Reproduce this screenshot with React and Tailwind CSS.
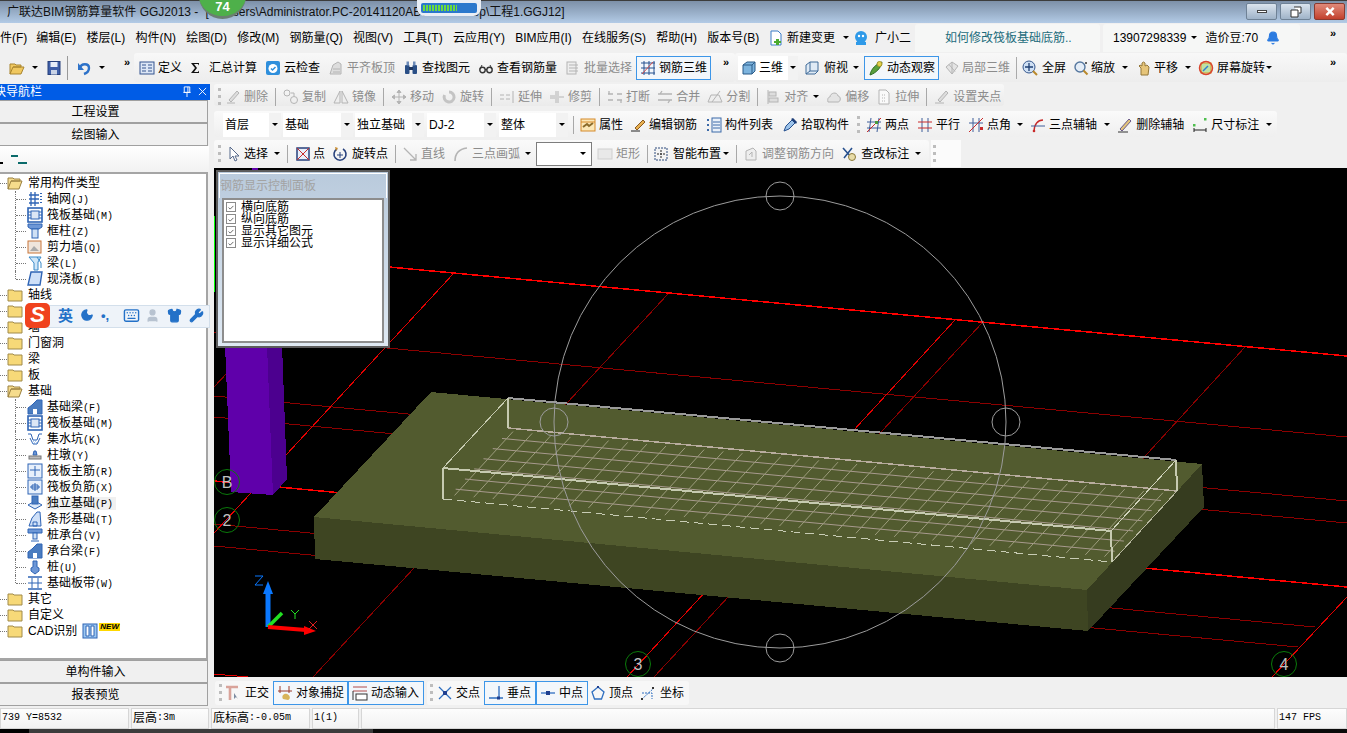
import React from "react";
import { Bell, Keyboard, Moon, Shirt, User, Wrench } from "lucide-react";

const B = "#2f64b5";
const G = "#b4b4b4";

// toolbar and tree icons, all on a 16 unit box
const icons = {
  open: <><path d="M1 14V4h5l1 1h5v2H4l-3 7h11l3-7H4" fill="#f0c860" stroke="#a9852f" /></>,
  save: <><rect x="2" y="1.500" width="12" height="13" fill="#3f5fa8" stroke="#27407c" /><rect x="4.500" y="2" width="7" height="5" fill="#e8eef8" /><rect x="5" y="10" width="6" height="4.500" fill="#c9d3e6" /></>,
  undo: <><path d="M3 8c1-5 9-5 9 0 0 3-2 5-5 6" fill="none" stroke="#2d72c9" strokeWidth="2.400" /><path d="M1 3v7h6z" fill="#2d72c9" /></>,
  define: <><rect x="1" y="2" width="14" height="12" fill="#dce6f5" stroke="#34558f" /><path d="M3 5h4M3 8h4M3 11h4M9 5h4M9 8h4M9 11h4" stroke="#34558f" /></>,
  sigma: <path d="M1 3h8v2.500L8 4H4l3 4-3 4h4l1-1.500V13H1l4-5z" fill="#111" />,
  cloud: <><rect x="1" y="1" width="14" height="14" rx="2" fill="#2f8fdc" /><circle cx="8" cy="8.500" r="4.500" fill="#fff" /><path d="M6 8.500l1.500 1.500 3-3" fill="none" stroke="#2f8fdc" strokeWidth="1.500" /></>,
  align: <><path d="M2 14l3-9 5-3 3 2v10z" fill="#ddd" stroke={G} /><path d="M5 9h7M5 12h7" stroke={G} /></>,
  binoc: <><rect x="2" y="5" width="4.500" height="9" rx="1" fill="#2a4f86" /><rect x="9.500" y="5" width="4.500" height="9" rx="1" fill="#2a4f86" /><rect x="3.500" y="1.500" width="2.500" height="4" fill="#6d8bb8" /><rect x="10" y="1.500" width="2.500" height="4" fill="#6d8bb8" /><rect x="6" y="7" width="4" height="3" fill="#1d3660" /></>,
  glasses: <><circle cx="4.500" cy="10" r="2.700" fill="none" stroke="#333" strokeWidth="1.400" /><circle cx="11.500" cy="10" r="2.700" fill="none" stroke="#333" strokeWidth="1.400" /><path d="M7 9.500h2M2 9l2-4M14 9l-2-4" stroke="#333" /></>,
  batch: <><rect x="2" y="2" width="9" height="12" fill="#eee" stroke={G} /><path d="M4 5h9M4 8h9M4 11h9" stroke={G} /></>,
  rebar3d: <><path d="M1 3h14M1 8h14M1 13h14M4 1v14M9 1v14M14 1v14" fill="none" stroke="#24508f" /><path d="M2 14L13 2" stroke="#d04a4a" /></>,
  cube: <><path d="M2 5l4-3h8v9l-3 3H2z" fill="#7db4de" stroke="#2b5a88" /><path d="M2 5h9v9M11 5l3-3" fill="none" stroke="#2b5a88" /></>,
  top: <><path d="M2 5l4-3h8v9l-3 3H2z" fill="#dfeaf5" stroke="#3f6a98" /><path d="M6 2v9h8M6 11l-4 3" fill="none" stroke="#3f6a98" /></>,
  orbit: <><path d="M2 15c1-6 6-11 12-13-1 6-6 11-12 13z" fill="#5aa03c" stroke="#2f6b22" /><circle cx="11.500" cy="4" r="2.500" fill="#e2d24c" stroke="#a0922a" /></>,
  local3d: <><path d="M2 7l6-5 6 4-6 8z" fill="#e4e4e4" stroke={G} /><path d="M5 4.500l6 7M8 2v12" stroke={G} /></>,
  full: <><circle cx="7" cy="7" r="6" fill="#cfe0f4" stroke="#36588e" /><path d="M7 3v8M3 7h8" stroke="#1f3f73" strokeWidth="1.300" /><path d="M11 11l4 4" stroke="#b9892b" strokeWidth="2" /></>,
  zoom: <><circle cx="7" cy="7" r="5" fill="#e4edf7" stroke="#55779f" strokeWidth="1.400" /><path d="M10.500 10.500l4 4" stroke="#b9892b" strokeWidth="2" /><path d="M12 3h2M13 2v2" stroke="#333" /></>,
  pan: <path d="M5 15V8L3 6l1-1 2 1V3l1.500-1L9 3v3l2-1 2 2-1 8z" fill="#e6c57a" stroke="#94783a" />,
  rot: <><rect x="3" y="3" width="10" height="10" fill="#bfe0a5" stroke="#d4a020" /><circle cx="8" cy="8" r="6.500" fill="none" stroke="#d8452f" strokeWidth="1.500" /><path d="M5 11l5-5" stroke="#2f7fcf" strokeWidth="1.500" /></>,
  file: <><path d="M3 1h7l3 3v11H3z" fill="#fff" stroke="#3d7fc8" /><path d="M8 9h3v2h2v2h-2v2H8v-2H6v-2h2z" fill="#4caa2f" /></>,
  ghost: <><circle cx="8" cy="7" r="6" fill="#2f9ae8" /><circle cx="6" cy="6" r="1.200" fill="#fff" /><circle cx="10" cy="6" r="1.200" fill="#fff" /><path d="M3 12h10v3H3z" fill="#2f9ae8" /></>,
  del: <><path d="M2 14h8M4 11l8-9 2 2-8 9z" fill="#ddd" stroke={G} /></>,
  copy: <><circle cx="4" cy="4" r="3" fill="none" stroke={G} /><circle cx="11" cy="11" r="3.500" fill="none" stroke={G} /><path d="M8 4h3v3" fill="none" stroke={G} /></>,
  mirror: <><path d="M7 2L1 14h6zM9 2l6 12H9z" fill="#eee" stroke={G} /></>,
  move: <path d="M8 1v14M1 8h14M8 1L6 3.500h4zM8 15l-2-2.500h4zM1 8l2.500-2v4zM15 8l-2.500-2v4z" fill={G} stroke={G} />,
  rotate: <path d="M8 3a5 5 0 1 1-4.500 3" fill="none" stroke="#c4c4c4" strokeWidth="3" />,
  extend: <path d="M14 2v12M1 6h4M1 10h4M7 6h4M7 10h4" fill="none" stroke={G} />,
  trim: <path d="M7 2v12M9 2v12M1 7h5M1 9h5M10 8h5" fill="none" stroke={G} />,
  split: <path d="M1 5h5M10 5h5M1 11h5M10 11h5M2 2v3M14 11v3" fill="none" stroke={G} strokeWidth="1.300" />,
  merge: <path d="M1 5h14M1 11h14M5 2l-2 3M11 14l2-3" fill="none" stroke={G} strokeWidth="1.300" />,
  cut: <><path d="M1 13h14L12 6H4z" fill="#eee" stroke={G} /><path d="M5 13l8-11" stroke={G} /></>,
  alignL: <><path d="M3 1v14" stroke={G} /><rect x="4" y="3" width="7" height="4" fill="#ddd" stroke={G} /><rect x="4" y="9" width="9" height="4" fill="#ddd" stroke={G} /></>,
  offset: <path d="M2 13c-1-4 1-5 2-5 0-4 7-6 8-1 3 0 3 6 0 6z" fill="#e4e4e4" stroke={G} />,
  stretch: <><path d="M3 1h7l3 3v11H3z" fill="#fafafa" stroke={G} /><path d="M6 6h4M6 9h4M6 12h4" stroke={G} strokeDasharray="1 1" /></>,
  grip: <><path d="M1 14h9M4 11l8-9 2 2-8 9z" fill="#ddd" stroke={G} /></>,
  prop: <><rect x="1" y="2" width="14" height="12" fill="#fbe7b7" stroke="#d58a2a" /><path d="M3 10l4-3 2 2 4-3" fill="none" stroke="#8a6a2a" strokeWidth="2" /><path d="M1 5h14" stroke="#d58a2a" /></>,
  pen: <><path d="M1 14h9" stroke="#222" /><path d="M5 11l8-8 2 2-8 8z" fill="#e8b050" stroke="#8a5a20" /></>,
  list: <><path d="M1 3h2M1 8h2M1 13h2" stroke="#3d6aa8" strokeWidth="2" /><rect x="6" y="1" width="9" height="14" fill="#eaf1fa" stroke="#3d6aa8" /><path d="M7 5h7M7 8h7M7 11h7" stroke="#3d6aa8" /></>,
  dropper: <><path d="M2 14l2-5 6-6 3 3-6 6z" fill="#9cc3ea" stroke="#244f8e" /><path d="M9 2l2-1 4 4-1 2z" fill="#1e3f78" /></>,
  two: <><path d="M5 1L3 15M13 1L11 15M1 5h14M1 11h14" stroke="#3f5f9a" /><path d="M1 15L15 1" stroke="#c92a2a" /><rect x="9" y="4" width="3" height="3" fill="#4a9a3a" /></>,
  para: <><path d="M5 1v14M11 1v14" stroke="#3f5f9a" /><path d="M1 5h14M1 11h14" stroke="#c92a2a" strokeWidth="1.200" fill="none" /></>,
  angle: <><path d="M5 1v14M11 1v14M1 6h14" stroke="#3f5f9a" /><path d="M1 15L15 1" stroke="#c92a2a" /><rect x="12" y="10" width="3" height="3" fill="#c92a2a" /></>,
  arc: <><path d="M4 15C4 7 8 3 13 3" fill="none" stroke="#c92a2a" strokeWidth="1.300" /><path d="M1 9h14" stroke="#3f5f9a" /><circle cx="4" cy="14" r="1.300" fill="#c92a2a" /></>,
  erase: <><path d="M1 15h10" stroke="#333" /><path d="M3 12l9-10 2 2-9 10z" fill="#e2c47a" stroke="#6a5a8a" /></>,
  dim: <><path d="M2 11v4M14 11v4M2 13h12" stroke="#222" /><rect x="1" y="7" width="2.500" height="2.500" fill="#4fbf4f" /><rect x="12" y="1" width="2.500" height="2.500" fill="#4fbf4f" /></>,
  arrow: <path d="M4 1v12l3-3 2 5 2-1-2-4h4z" fill="#fff" stroke="#55688a" />,
  point: <><rect x="2" y="2" width="12" height="12" fill="#e8eefa" stroke="#27407c" strokeWidth="1.500" /><path d="M2 2l12 12M14 2L2 14" stroke="#c92a2a" /></>,
  rotPt: <><path d="M5 3a6 6 0 1 0 6 0" fill="none" stroke="#27407c" strokeWidth="1.600" /><path d="M8 6v6M5 9h6" stroke="#27407c" /><path d="M3 1l3 1-2 3z" fill="#c98a2a" /></>,
  line: <><path d="M2 2l12 12M14 8v6H8" fill="none" stroke={G} strokeWidth="1.300" /></>,
  arc3: <path d="M2 15C2 8 6 3 14 2" fill="none" stroke={G} strokeWidth="1.600" />,
  rect: <rect x="1" y="3" width="14" height="10" fill="#e9e9e9" stroke="#cfcfcf" />,
  smart: <><rect x="2" y="2" width="12" height="12" fill="#f4f4f4" stroke="#2c4a7c" strokeDasharray="2 1" /><path d="M8 4v8M4 8h8" stroke="#222" strokeDasharray="2 1" /></>,
  rebarDir: <><path d="M3 5l7-3 3 3v9H3z" fill="#eee" stroke={G} /><path d="M6 9l3-3v5" fill="none" stroke={G} /></>,
  check: <><path d="M2 2l9 10M11 2L3 12" stroke="#27508e" strokeWidth="1.600" /><circle cx="11" cy="11" r="3.500" fill="#e8dca8" stroke="#8c7a3a" /></>,
  ortho: <><path d="M1 2h12M5 2v13" stroke="#d9a39a" strokeWidth="2.600" /><path d="M9 8v6l2-2 2 2z" fill="#7d8ba0" /></>,
  snap: <><path d="M3 1v7M12 1v7M1 6h14" stroke="#9a3a2a" /><path d="M6 14c-2-3 1-6 4-5s4 5 1 6z" fill="#d8b45a" /></>,
  input: <><path d="M1 2h14M1 6h14" stroke="#b04a4a" /><rect x="4" y="9" width="11" height="6" fill="#fff" stroke="#333" /><path d="M1 6v9" stroke="#333" /></>,
  cross: <><path d="M2 2l12 12M14 2L2 14" stroke="#2f6fc0" strokeWidth="1.300" /><rect x="6" y="6" width="4" height="4" fill="#1f3f8f" /></>,
  perp: <><path d="M1 13h14M11 1v12" stroke="#2f6fc0" strokeWidth="1.300" /><rect x="9" y="11.500" width="3" height="3" fill="#1f3f8f" /></>,
  mid: <><path d="M1 8h14" stroke="#2f6fc0" strokeWidth="1.300" /><rect x="6" y="6" width="4" height="4" fill="#1f3f8f" /></>,
  vertex: <><path d="M8 2l6 5-2.500 7h-7L2 7z" fill="none" stroke="#2f6fc0" strokeWidth="1.300" /><rect x="7" y="1" width="2" height="2" fill="#1f3f8f" /></>,
  coord: <><path d="M2 14L14 3M2 8h10v6" fill="none" stroke="#2f6fc0" strokeDasharray="2 1" /><rect x="1" y="13" width="2" height="2" fill="#333" /><rect x="12" y="2" width="2" height="2" fill="#333" /></>,
  grid: <><path d="M2 4h10M2 8h10M2 12h10M4 1v14M8 1v14" stroke={B} strokeWidth="1.300" /><path d="M14 2v12" stroke={B} strokeDasharray="1 2" strokeWidth="2" /></>,
  raft: <><rect x="1" y="1" width="14" height="14" fill="#fff" stroke={B} strokeWidth="1.600" /><rect x="4" y="4" width="8" height="8" fill="#dce6f5" stroke={B} /><path d="M1 5h3M1 8h3M1 11h3M12 5h3M12 8h3M12 11h3" stroke={B} /></>,
  column: <><path d="M1 1h14v3l-3 2H4L1 4z" fill="#6d97d6" stroke={B} /><rect x="5" y="6" width="6" height="9" fill="#cfe0f5" stroke={B} /></>,
  wall: <><rect x="1" y="2" width="13" height="12" fill="#efe5dc" stroke="#c9773a" /><path d="M3 12l4-5 5 5" fill="#aaa" /></>,
  beam: <><path d="M2 2h12l-3 5v8H7V8z" fill="#cfe6f8" stroke="#3a8ac8" /><path d="M10 2l4 6v5" fill="none" stroke="#3a8ac8" /></>,
  slab: <path d="M4 1h11l-2 13H1z" fill="#cfe0f8" stroke={B} strokeWidth="1.400" />,
  fbeam: <><path d="M1 15V9l4-3 5-5h5v14z" fill="#4a7cc0" stroke={B} /><path d="M6 15v-5h4v5z" fill="#fff" /></>,
  sump: <><path d="M1 3h3l2 6h4l2-6h3M3 7l3 6h4l3-6" fill="none" stroke={B} /><path d="M6 10h4M5 12h6" stroke="#6fa0e0" strokeDasharray="1 1" /></>,
  pier: <><path d="M6 8l1-4h2l1 4z" fill="#6d97d6" stroke={B} /><rect x="2" y="9" width="12" height="3" fill="#bbb" stroke="#777" /></>,
  rebarM: <><rect x="1" y="1" width="14" height="14" fill="#e8f0fb" stroke={B} /><path d="M8 3v10M3 7h10" stroke={B} /></>,
  rebarN: <><rect x="1" y="1" width="14" height="14" fill="#e8f0fb" stroke={B} /><path d="M3 8h10M8 4v8M5 6h6v4H5z" fill="none" stroke={B} /></>,
  iso: <><path d="M1 10l7-4 7 4-7 4z" fill="#dce9f8" stroke={B} /><rect x="5" y="1" width="6" height="8" fill="#4a7cc0" stroke={B} /></>,
  strip: <><path d="M2 15l3-8 5-6h3l1 14zM6 15v-4h4v4z" fill="#cfe0f8" stroke={B} /></>,
  cap: <><path d="M1 2h14v4H1z" fill="#6d97d6" stroke={B} /><rect x="6" y="6" width="4" height="6" fill="#cfe0f5" stroke={B} /><path d="M4 14h8" stroke={B} /></>,
  pile: <><path d="M6 2h4v6l2 1v3l-4 3-4-3V9l2-1z" fill="#6d97d6" stroke={B} /></>,
  band: <><path d="M1 2h14M1 14h14" stroke={B} strokeWidth="1.400" /><path d="M5 3v10M11 3v10M1 8h14" stroke={B} /></>,
  cad: <><rect x="1" y="1" width="14" height="14" fill="#9cc6f0" stroke={B} /><path d="M4 3h3v10H4zM9 3h3v10H9z" fill="#fff" stroke={B} /></>,
};

function Ic({ n }) {
  return <svg viewBox="0 0 16 16" className="w-4 h-4 shrink-0 block">{icons[n]}</svg>;
}

function Caret({ className = "" }) {
  return <span className={`w-0 h-0 shrink-0 border-x-[3px] border-t-[3px] border-x-transparent border-t-black ${className}`} />;
}

function Grip() {
  return <span className="block w-[3px] h-[17px] shrink-0 border-l-[3px] border-dotted border-[#bdbdbd]" />;
}

function Sep() {
  return <span className="block w-px h-[18px] shrink-0 bg-[#a8a8a8]" />;
}

function Chevrons({ className = "" }) {
  return <span className={`text-[11px] leading-none font-bold text-black ${className}`}>»</span>;
}

function Tool({ icon, label, gray, on, gap = "gap-[3px]", className = "" }) {
  return (
    <div className={`flex items-center ${gap} shrink-0 whitespace-nowrap ${gray ? "text-[#8c8c8c]" : "text-black"} ${on ? "h-[24px] px-[3px] border border-[#3d96e8] bg-[#f3f7fb]" : ""} ${className}`}>
      <Ic n={icon} />
      {label && <span>{label}</span>}
    </div>
  );
}

function Combo({ label, className }) {
  return (
    <div className={`flex items-center justify-between h-[24px] bg-white pl-[2px] ${className}`}>
      <span>{label}</span>
      <span className="w-[12px] h-full bg-[#f2f2f2] flex items-center justify-center"><Caret /></span>
    </div>
  );
}

function TitleBar() {
  return (
    <div className="relative h-[23px] shrink-0 border-t border-[#3c3c3c] bg-linear-to-b from-[#7d90a8] to-[#b3cbe6] flex items-center pl-[7px] text-[12px] text-[#111] whitespace-nowrap">
      <span>广联达BIM钢筋算量软件 GGJ2013 -</span>
      <span className="ml-[7px]">[C:\Users\Administrator.PC-20141120ABCD\Desktop\工程1.GGJ12]</span>
      <div className="absolute right-[2px] top-[2px] flex gap-[3px]">
        <div className="w-[31px] h-[17px] rounded-[2px] border border-[#6f8296] bg-linear-to-b from-[#dbe4ee] to-[#9fb3c8] flex items-center justify-center">
          <span className="w-[10px] h-[3px] bg-white border border-[#444]" />
        </div>
        <div className="w-[31px] h-[17px] rounded-[2px] border border-[#6f8296] bg-linear-to-b from-[#dbe4ee] to-[#9fb3c8] flex items-center justify-center">
          <svg viewBox="0 0 12 12" className="w-[12px] h-[12px]"><path d="M4 1h7v6H9M1 4h7v7H1z" fill="#fff" stroke="#333" /></svg>
        </div>
        <div className="w-[31px] h-[17px] rounded-[2px] border border-[#8a3a30] bg-linear-to-b from-[#e0897a] to-[#c23f2c] flex items-center justify-center">
          <svg viewBox="0 0 12 12" className="w-[12px] h-[11px]"><path d="M2 2l8 8M10 2l-8 8" stroke="#fff" strokeWidth="2.600" /></svg>
        </div>
      </div>
    </div>
  );
}

function MenuBar() {
  const items = ["编辑(E)", "楼层(L)", "构件(N)", "绘图(D)", "修改(M)", "钢筋量(Q)", "视图(V)", "工具(T)", "云应用(Y)", "BIM应用(I)", "在线服务(S)", "帮助(H)", "版本号(B)"];
  return (
    <div className="relative h-[29px] shrink-0 bg-[#f0f0f0] flex items-center whitespace-nowrap">
      <div className="flex items-center gap-[10.25px] w-[768px] shrink-0">
        <span className="w-[26px]">件(F)</span>
        {items.map((t) => <span key={t}>{t}</span>)}
      </div>
      <div className="flex items-center gap-[3px] w-[69px] shrink-0"><Ic n="file" /><span>新建变更</span></div>
      <Caret className="ml-[6px] mr-[4px]" />
      <div className="flex items-center gap-[6px] w-[60px] shrink-0"><Ic n="ghost" /><span>广小二</span></div>
      <div className="h-[28px] w-[185px] ml-[2px] pl-[30px] shrink-0 rounded-t-[3px] bg-[#f6f7f6] flex items-center text-[#1c6c7c]">如何修改筏板基础底筋..</div>
      <div className="h-[28px] w-[197px] ml-[3px] pl-[10px] shrink-0 rounded-t-[3px] bg-[#f6f7f6] flex items-center">
        <span>13907298339</span>
        <Caret className="ml-[5px] mr-[8px]" />
        <span>造价豆:70</span>
        <Bell className="w-[14px] h-[16px] ml-[8px] text-[#2b7be0] fill-[#2b7be0]" />
      </div>
      <Chevrons className="absolute right-[11px] top-[5px]" />
    </div>
  );
}

function MainToolbar() {
  return (
    <div className="h-[31px] shrink-0 bg-[#f0f0f0] flex items-center whitespace-nowrap">
      <div className="relative flex items-center w-[134px] shrink-0 pl-[9px] h-full">
        <Ic n="open" />
        <Caret className="ml-[7px] mr-[8px]" />
        <Ic n="save" />
        <span className="w-px h-[24px] bg-[#999] ml-[5px] mr-[9px]" />
        <Ic n="undo" />
        <Caret className="ml-[6px]" />
        <Chevrons className="absolute right-[4px] top-[5px]" />
      </div>
      <div className="relative flex items-center gap-[8px] w-[601px] shrink-0 h-[29px] pl-[5px] rounded-[3px] bg-linear-to-b from-[#f8f8f8] to-[#ededed]">
        <Tool icon="define" label="定义" />
        <Tool icon="sigma" label="汇总计算" />
        <Tool icon="cloud" label="云检查" />
        <Tool icon="align" label="平齐板顶" gray />
        <Tool icon="binoc" label="查找图元" />
        <Tool icon="glasses" label="查看钢筋量" />
        <Tool icon="batch" label="批量选择" gray />
        <Tool icon="rebar3d" label="钢筋三维" on className="-ml-[4px]" />
        <Chevrons className="absolute right-[6px] top-[4px]" />
      </div>
      <div className="relative flex items-center flex-1 h-[29px] rounded-[3px] bg-linear-to-b from-[#f8f8f8] to-[#ededed] pl-[3px]">
        <div className="flex items-center gap-[2px] h-[24px] w-[50px] bg-white pl-[3px]"><Ic n="cube" /><span>三维</span></div>
        <span className="w-[10px] h-[24px] bg-[#f2f2f2] flex items-center justify-center"><Caret /></span>
        <Tool icon="top" label="俯视" gap="gap-[4px]" className="ml-[6px]" />
        <Caret className="ml-[5px] mr-[5px]" />
        <Tool icon="orbit" label="动态观察" on />
        <Tool icon="local3d" label="局部三维" gray gap="gap-[2px]" className="ml-[5px]" />
        <span className="w-px h-[22px] bg-[#aaa] ml-[6px] mr-[5px]" />
        <Tool icon="full" label="全屏" gap="gap-[4px]" />
        <Tool icon="zoom" label="缩放" gap="gap-[2px]" className="ml-[7px]" />
        <Caret className="ml-[7px]" />
        <Tool icon="pan" label="平移" gap="gap-[2px]" className="ml-[8px]" />
        <Caret className="ml-[7px]" />
        <Tool icon="rot" label="屏幕旋转" className="ml-[7px]" />
        <Caret className="ml-[1px]" />
        <Chevrons className="absolute right-[11px] top-[4px]" />
      </div>
    </div>
  );
}

function EditToolbars() {
  return (
    <div className="h-[85px] shrink-0 flex flex-col bg-[#f0f0f0] whitespace-nowrap">
      <div className="flex items-center gap-[7px] w-[790px] h-[22px] mt-px pl-[4px] pt-[3px] rounded-[3px] bg-linear-to-b from-[#f8f8f8] to-[#ebebeb]">
        <Grip />
        <Tool icon="del" label="删除" gray className="-ml-[3px]" />
        <Sep />
        <Tool icon="copy" label="复制" gray />
        <Tool icon="mirror" label="镜像" gray />
        <Sep />
        <Tool icon="move" label="移动" gray />
        <Tool icon="rotate" label="旋转" gray />
        <Sep />
        <Tool icon="extend" label="延伸" gray />
        <Tool icon="trim" label="修剪" gray />
        <Sep />
        <Tool icon="split" label="打断" gray />
        <Tool icon="merge" label="合并" gray />
        <Tool icon="cut" label="分割" gray />
        <Sep />
        <div className="flex items-center gap-[5px]"><Tool icon="alignL" label="对齐" gray /><Caret className="border-t-[#777]" /></div>
        <Tool icon="offset" label="偏移" gray />
        <Tool icon="stretch" label="拉伸" gray />
        <Sep />
        <Tool icon="grip" label="设置夹点" gray />
      </div>
      <div className="flex items-center w-[1063px] h-[26px] mt-[5px] pl-[9px] pt-px rounded-[3px] bg-linear-to-b from-[#fafafa] to-[#efefef]">
        <Combo label="首层" className="w-[58px] mr-[2px]" />
        <Combo label="基础" className="w-[70px] mr-[2px]" />
        <Combo label="独立基础" className="w-[69px] mr-[3px]" />
        <Combo label="DJ-2" className="w-[69px] mr-[3px]" />
        <Combo label="整体" className="w-[69px] mr-[5px]" />
        <Sep />
        <Tool icon="prop" label="属性" className="ml-[6px]" />
        <Tool icon="pen" label="编辑钢筋" className="ml-[7px]" />
        <Tool icon="list" label="构件列表" className="ml-[9px]" />
        <Tool icon="dropper" label="拾取构件" className="ml-[9px]" />
        <span className="ml-[8px] mr-[6px]"><Grip /></span>
        <Tool icon="two" label="两点" />
        <Tool icon="para" label="平行" className="ml-[8px]" />
        <Tool icon="angle" label="点角" className="ml-[8px]" />
        <Caret className="ml-[6px]" />
        <Tool icon="arc" label="三点辅轴" className="ml-[7px]" />
        <Caret className="ml-[7px]" />
        <Tool icon="erase" label="删除辅轴" className="ml-[7px]" />
        <Tool icon="dim" label="尺寸标注" className="ml-[8px]" />
        <Caret className="ml-[7px]" />
      </div>
      <div className="flex items-center gap-[2px] h-[27px] mt-[3px]">
        <div className="flex items-center w-[715px] h-full pl-[4px] rounded-[3px] bg-linear-to-b from-[#fafafa] to-[#efefef]">
          <Grip />
          <Tool icon="arrow" label="选择" gap="gap-[2px]" className="ml-[5px]" />
          <Caret className="ml-[6px]" />
          <span className="ml-[7px] mr-[7px]"><Sep /></span>
          <Tool icon="point" label="点" gap="gap-[2px]" />
          <Tool icon="rotPt" label="旋转点" gap="gap-[4px]" className="ml-[7px]" />
          <span className="ml-[7px] mr-[6px]"><Sep /></span>
          <Tool icon="line" label="直线" gray />
          <Tool icon="arc3" label="三点画弧" gray className="ml-[8px]" />
          <Caret className="ml-[5px] border-t-[#777]" />
          <div className="w-[56px] h-[24px] ml-[5px] border border-[#7d7d7d] bg-white flex items-center justify-end pr-[5px]"><Caret className="border-t-[#777]" /></div>
          <Tool icon="rect" label="矩形" gray className="ml-[5px]" />
          <span className="ml-[7px] mr-[5px]"><Sep /></span>
          <Tool icon="smart" label="智能布置" gap="gap-[4px]" />
          <Caret className="ml-[2px]" />
          <span className="ml-[7px] mr-[6px]"><Sep /></span>
          <Tool icon="rebarDir" label="调整钢筋方向" gray />
          <Tool icon="check" label="查改标注" gap="gap-[4px]" className="ml-[7px]" />
          <Caret className="ml-[6px]" />
        </div>
        <div className="w-[30px] h-full bg-[#fbfbfb] flex items-center pl-[2px]"><Grip /></div>
      </div>
    </div>
  );
}

function TreeLabel({ name, code }) {
  return (
    <span className="whitespace-nowrap">
      {name}
      {code && <span className="font-['Liberation_Mono',monospace] text-[10px]">({code})</span>}
    </span>
  );
}

function Folder({ name, open, extra }) {
  return (
    <div className="relative flex items-center h-4 pl-[7px]">
      <span className="absolute left-0 top-[8px] w-[7px] border-t border-dotted border-[#777]" />
      {open ? (
        <svg viewBox="0 0 16 14" className="w-[16px] h-[14px] block"><path d="M1 13V2h5l1 1h6v2H4l-3 8h11l3-8H4" fill="#f6dc8c" stroke="#9a8040" /></svg>
      ) : (
        <svg viewBox="0 0 16 14" className="w-[16px] h-[14px] block"><path d="M1 2h5l1 1h8v10H1z" fill="#f7d978" stroke="#a08a4a" /></svg>
      )}
      <span className="ml-[5px] whitespace-nowrap">{name}</span>
      {extra}
    </div>
  );
}

function Leaf({ icon, name, code, last, hot }) {
  return (
    <div className="relative flex items-center h-4 pl-[27px]">
      <span className={`absolute left-[15px] top-0 border-l border-dotted border-[#777] ${last ? "h-[8px]" : "h-4"}`} />
      <span className="absolute left-[16px] top-[8px] w-[10px] border-t border-dotted border-[#777]" />
      <Ic n={icon} />
      <span className={`ml-[3px] pl-px ${hot ? "bg-[#f0f0f0] w-[70px]" : ""}`}><TreeLabel name={name} code={code} /></span>
    </div>
  );
}

const common = [["grid", "轴网", "J"], ["raft", "筏板基础", "M"], ["column", "框柱", "Z"], ["wall", "剪力墙", "Q"], ["beam", "梁", "L"], ["slab", "现浇板", "B"]];
const base = [["fbeam", "基础梁", "F"], ["raft", "筏板基础", "M"], ["sump", "集水坑", "K"], ["pier", "柱墩", "Y"], ["rebarM", "筏板主筋", "R"], ["rebarN", "筏板负筋", "X"], ["iso", "独立基础", "P"], ["strip", "条形基础", "T"], ["cap", "桩承台", "V"], ["fbeam", "承台梁", "F"], ["pile", "桩", "U"], ["band", "基础板带", "W"]];

function SideButton({ label }) {
  return <div className="h-[23px] shrink-0 w-[208px] pr-[16px] border border-[#a0a0a0] border-l-0 bg-[#f0f0f0] flex items-center justify-center">{label}</div>;
}

function Sidebar() {
  return (
    <aside className="w-[214px] shrink-0 flex flex-col pt-px bg-[#f0f0f0]">
      <div className="h-[16px] shrink-0 w-[210px] bg-[#005ce6] text-white flex items-center justify-between overflow-hidden pr-[3px] pb-px">
        <span className="-ml-[6px] leading-none whitespace-nowrap">块导航栏</span>
        <span className="flex items-center gap-[6px]">
          <svg viewBox="0 0 10 12" className="w-[10px] h-[11px]"><path d="M2 1h6v6H2zM1 7h8M5 7v5M6 1v6" fill="none" stroke="#fff" /></svg>
          <svg viewBox="0 0 10 10" className="w-[9px] h-[9px]"><path d="M1 1l8 8M9 1l-8 8" stroke="#fff" /></svg>
        </span>
      </div>
      <SideButton label="工程设置" />
      <SideButton label="绘图输入" />
      <div className="h-[26px] shrink-0 w-[209px] flex items-start gap-[8px] pt-[9px] bg-linear-to-b from-[#ffffff] to-[#f2f2f2]">
        <span className="w-[3px] h-[2px] mt-[7px] bg-black" />
        <span className="flex flex-col gap-[5px] w-[16px]">
          <span className="w-[7px] h-[2px] bg-[#0a6a6a]" />
          <span className="w-[9px] h-[2px] ml-[7px] bg-[#0a6a6a]" />
        </span>
      </div>
      <div className="h-[488px] shrink-0 w-[208px] border-2 border-l-0 border-[#a5a5a5] bg-white pt-px">
        <Folder name="常用构件类型" open />
        {common.map(([i, n, c], k) => <Leaf key={n} icon={i} name={n} code={c} last={k === common.length - 1} />)}
        <Folder name="轴线" />
        <Folder name="柱" />
        <Folder name="墙" />
        <Folder name="门窗洞" />
        <Folder name="梁" />
        <Folder name="板" />
        <Folder name="基础" open />
        {base.map(([i, n, c], k) => <Leaf key={n + c} icon={i} name={n} code={c} last={k === base.length - 1} hot={c === "P"} />)}
        <Folder name="其它" />
        <Folder name="自定义" />
        <Folder name="CAD识别" extra={
          <span className="ml-[5px] flex items-start">
            <Ic n="cad" />
            <span className="ml-px px-px bg-[#ffd800] text-[8px] leading-[8px] italic font-bold">NEW</span>
          </span>
        } />
      </div>
      <SideButton label="单构件输入" />
      <SideButton label="报表预览" />
    </aside>
  );
}

// rebar mesh sits on the lower face of the wire box
const mesh = (() => {
  const p = (s, t) => [508 + 669 * s - 65 * t, 428 + 63 * s + 71 * t];
  const rows = [];
  const cols = [];
  for (let i = 1; i <= 6; i++) rows.push([p(0.005, i / 7), p(0.99, i / 7)]);
  for (let i = 0; i <= 34; i++) cols.push([p((i + 0.4) / 35, 0.04), p((i + 0.4) / 35, 0.94)]);
  return { rows, cols };
})();

function Bubble({ x, y, t }) {
  return (
    <g>
      <circle cx={x} cy={y} r="12.500" fill="none" stroke="#0b7a0b" />
      <text x={x} y={y + 6} textAnchor="middle" fontSize="16" fill="#c0c0c0" fontFamily="Liberation Sans, sans-serif">{t}</text>
    </g>
  );
}

function Viewport() {
  const bright = [[214, 481, 1347, 587], [389, 267, 1347, 356]];
  const dark = [[214, 332, 1347, 437], [214, 396, 1347, 501], [214, 417, 1347, 523], [214, 524, 1315, 627], [214, 546, 1298, 647], [668, 294, 313, 677], [983, 322, 654, 677], [1245, 347, 1050, 560], [214, 387, 228, 372]];
  const thin = [[454, 273, 214, 533], [955, 320, 627, 677], [1347, 597, 1272, 677], [214, 674, 248, 677]];
  return (
    <div className="h-[509px] shrink-0 bg-black">
      <svg viewBox="214 168 1133 509" className="w-[1133px] h-[509px] block" shapeRendering="crispEdges">
        {dark.map((l) => <line key={l.join()} x1={l[0]} y1={l[1]} x2={l[2]} y2={l[3]} stroke="#8c0000" />)}
        {bright.map((l) => <line key={l.join()} x1={l[0]} y1={l[1]} x2={l[2]} y2={l[3]} stroke="#ff0000" strokeWidth="1.500" />)}
        {thin.map((l) => <line key={l.join()} x1={l[0]} y1={l[1]} x2={l[2]} y2={l[3]} stroke="#e60000" />)}
        <rect x="214" y="216" width="1" height="76" fill="#00ff00" />
        <rect x="252" y="168" width="6" height="2" fill="#5f00aa" />

        <polygon points="225,345 267,345 273,495 231,492" fill="#5f00aa" />
        <polygon points="267,345 282,345 287,479 273,495" fill="#4c008f" />

        <polygon points="431,392 1202,464 1087,590 314,517" fill="#525b2f" />
        <polygon points="314,517 1087,590 1088,631 315,559" fill="#3e4522" />
        <polygon points="1087,590 1202,464 1204,507 1088,631" fill="#363c1f" />

        <g shapeRendering="auto">
          {mesh.rows.map((l, i) => <line key={i} x1={l[0][0]} y1={l[0][1]} x2={l[1][0]} y2={l[1][1]} stroke="#a89a8e" />)}
          {mesh.cols.map((l, i) => <line key={i} x1={l[0][0]} y1={l[0][1]} x2={l[1][0]} y2={l[1][1]} stroke="#9c9c7c" />)}
        </g>

        <g fill="none">
          <line x1="508" y1="428" x2="1177" y2="491" stroke="#b8ac9e" strokeWidth="1.500" />
          <line x1="443" y1="499" x2="1112" y2="562" stroke="#c8ccb4" strokeDasharray="9 5" />
          <line x1="1112" y1="562" x2="1177" y2="491" stroke="#b8b8a0" />
          <line x1="508" y1="398" x2="1176" y2="460" stroke="#9a9a9a" strokeWidth="2" />
          <line x1="443" y1="468" x2="1111" y2="531" stroke="#c6cab0" strokeWidth="2" />
          <line x1="443" y1="468" x2="508" y2="398" stroke="#c6cab0" />
          <line x1="1111" y1="531" x2="1176" y2="460" stroke="#d0d4bc" />
          <line x1="443" y1="468" x2="443" y2="499" stroke="#c6cab0" strokeWidth="2" />
          <line x1="508" y1="398" x2="508" y2="428" stroke="#c6cab0" strokeWidth="2" />
          <line x1="1111" y1="531" x2="1112" y2="562" stroke="#c6cab0" strokeWidth="2" />
          <line x1="1176" y1="460" x2="1177" y2="491" stroke="#c6cab0" strokeWidth="2" />
        </g>

        <g fill="none" stroke="#9c9c9c" shapeRendering="auto">
          <circle cx="780" cy="422" r="226" />
          <circle cx="780" cy="196" r="14" />
          <circle cx="554" cy="422" r="14" />
          <circle cx="1006" cy="422" r="14" />
          <circle cx="780" cy="648" r="14" />
        </g>

        <g shapeRendering="auto">
          <Bubble x={227} y={482} t="B" />
          <Bubble x={227} y={520} t="2" />
          <Bubble x={638} y={664} t="3" />
          <Bubble x={1284} y={664} t="4" />
          <path d="M268 627V592" stroke="#0a78ff" strokeWidth="5" />
          <path d="M268 581l-5 13h10z" fill="#0a78ff" />
          <path d="M268 627L282 613" stroke="#22e022" strokeWidth="3.500" />
          <path d="M268 627L306 630" stroke="#ff0000" strokeWidth="4" />
          <path d="M316 631l-12-5v9z" fill="#ff0000" />
          <path d="M255 576h8l-8 9h8" fill="none" stroke="#0a78ff" />
          <path d="M291 610l4 4 4-4M295 614v5" fill="none" stroke="#22e022" />
          <path d="M309 621l8 8M317 621l-8 8" fill="none" stroke="#e02020" />
        </g>
      </svg>
    </div>
  );
}

function SnapBar() {
  return (
    <div className="h-[30px] shrink-0 bg-[#f0f0f0] flex items-center gap-[4px] pl-px pt-px whitespace-nowrap">
      <div className="flex items-center h-[24px] w-[208px] pl-[4px] rounded-[3px] bg-[#f7f7f7]">
        <Grip />
        <Tool icon="ortho" label="正交" gap="gap-[4px]" className="ml-[3px]" />
        <Tool icon="snap" label="对象捕捉" on className="ml-[4px] w-[75px]" />
        <Tool icon="input" label="动态输入" on className="w-[76px]" />
      </div>
      <div className="flex items-center h-[24px] w-[262px] pl-[3px] rounded-[3px] bg-[#f7f7f7]">
        <Grip />
        <Tool icon="cross" label="交点" className="ml-[4px]" />
        <Tool icon="perp" label="垂点" on className="ml-[4px] w-[52px]" />
        <Tool icon="mid" label="中点" on className="w-[52px]" />
        <Tool icon="vertex" label="顶点" className="ml-[2px]" />
        <Tool icon="coord" label="坐标" gap="gap-[4px]" className="ml-[7px]" />
      </div>
    </div>
  );
}

function StatusBar() {
  const cell = "h-[21px] flex items-center border border-[#d6d6d6] bg-linear-to-b from-[#fdfdfd] to-[#f2f2f2] pl-px shrink-0 whitespace-nowrap";
  const mono = "font-['Liberation_Mono',monospace] text-[10px]";
  return (
    <div className="h-[22px] shrink-0 flex items-center gap-[2px] bg-[#f0f0f0]">
      <div className={`${cell} w-[129px] ${mono}`}>739 Y=8532</div>
      <div className={`${cell} w-[78px]`}>层高<span className={mono}>:3m</span></div>
      <div className={`${cell} w-[99px]`}>底标高<span className={mono}>:-0.05m</span></div>
      <div className={`${cell} w-[47px] ${mono}`}>1(1)</div>
      <div className={`${cell} w-[914px]`} />
      <div className={`${cell} w-[70px] ${mono}`}>147 FPS</div>
    </div>
  );
}

function SogouBar() {
  return (
    <div className="absolute left-[25px] top-[302px] w-[185px] h-[26px] flex items-center">
      <div className="absolute left-[8px] top-[3px] w-[177px] h-[23px] bg-[#eef3f9] border border-[#d3dfeb]" />
      <div className="relative w-[25px] h-[25px] rounded-[5px] bg-[#f0431e] flex items-center justify-center text-white font-black italic text-[22px] leading-none font-['Liberation_Sans',sans-serif]">S</div>
      <span className="relative ml-[8px] text-[#2371c8] text-[15px] font-bold leading-none">英</span>
      <Moon className="relative ml-[7px] w-[14px] h-[14px] text-[#2371c8] fill-[#2371c8]" />
      <span className="relative ml-[7px] w-[13px] text-[#2371c8] text-[13px] font-bold leading-none">•,</span>
      <Keyboard className="relative ml-[9px] w-[17px] h-[17px] text-[#2371c8]" />
      <User className="relative ml-[5px] w-[15px] h-[15px] text-[#b7c2d0] fill-[#b7c2d0]" />
      <Shirt className="relative ml-[7px] w-[15px] h-[15px] text-[#2371c8] fill-[#2371c8]" />
      <Wrench className="relative ml-[7px] w-[15px] h-[15px] text-[#2371c8] fill-[#2371c8]" />
    </div>
  );
}

function RebarPanel() {
  const rows = ["横向底筋", "纵向底筋", "显示其它图元", "显示详细公式"];
  return (
    <div className="absolute left-[216px] top-[170px] w-[174px] h-[178px] border-2 border-[#5c5c5c] bg-linear-to-b from-[#b9cadc] to-[#dfe9f3] p-px flex flex-col">
      <div className="h-[25px] flex items-center text-[#a3a3a3] border-x border-t border-white">钢筋显示控制面板</div>
      <div className="flex-1 mx-[3px] mb-[2px] border-2 border-[#8d8d8d] bg-white pt-px pl-[2px]">
        {rows.map((t) => (
          <div key={t} className="flex items-center h-[12px] leading-[12px] gap-[5px]">
            <span className="w-[10px] h-[10px] border border-[#8a8a8a] flex items-center justify-center">
              <svg viewBox="0 0 10 10" className="w-[9px] h-[9px]"><path d="M2 5l2 2 4-4" fill="none" stroke="#444" /></svg>
            </span>
            <span className="whitespace-nowrap">{t}</span>
          </div>
        ))}
      </div>
    </div>
  );
}

function Overlays() {
  return (
    <>
      <div className="absolute left-[199px] -top-[28px] w-[47px] h-[47px] rounded-full bg-[#4eb04a] border-b-[3px] border-[#6b7e72] flex items-end justify-center pb-[3px] text-white text-[13px] font-bold font-['Liberation_Sans',sans-serif]">74</div>
      <div className="absolute left-[417px] top-0 w-[64px] h-[16px] rounded-b-[8px] bg-[#e9eef5] flex items-center justify-center">
        <div className="w-[56px] h-[10px] rounded-[2px] bg-[#2b78cc] flex items-center pl-[2px]">
          <div className="w-[34px] h-[6px] bg-[repeating-linear-gradient(90deg,#6bdc3a_0_2px,#2b78cc_2px_3px)]" />
        </div>
      </div>
    </>
  );
}

export default function App() {
  return (
    <div className="relative w-[1347px] h-[733px] overflow-hidden flex flex-col bg-[#f0f0f0] text-[12px] leading-none text-black font-['Liberation_Sans','Noto_Sans_CJK_SC',sans-serif]">
      <TitleBar />
      <MenuBar />
      <MainToolbar />
      <div className="flex h-[624px] shrink-0">
        <Sidebar />
        <div className="w-[1133px] shrink-0 flex flex-col">
          <EditToolbars />
          <Viewport />
          <SnapBar />
        </div>
      </div>
      <StatusBar />
      <div className="flex-1 flex">
        <div className="w-[29px] bg-black" />
        <div className="w-[344px] bg-[#3c3c3c]" />
        <div className="flex-1 bg-[#0a0a0a]" />
      </div>
      <Overlays />
      <RebarPanel />
      <SogouBar />
    </div>
  );
}
